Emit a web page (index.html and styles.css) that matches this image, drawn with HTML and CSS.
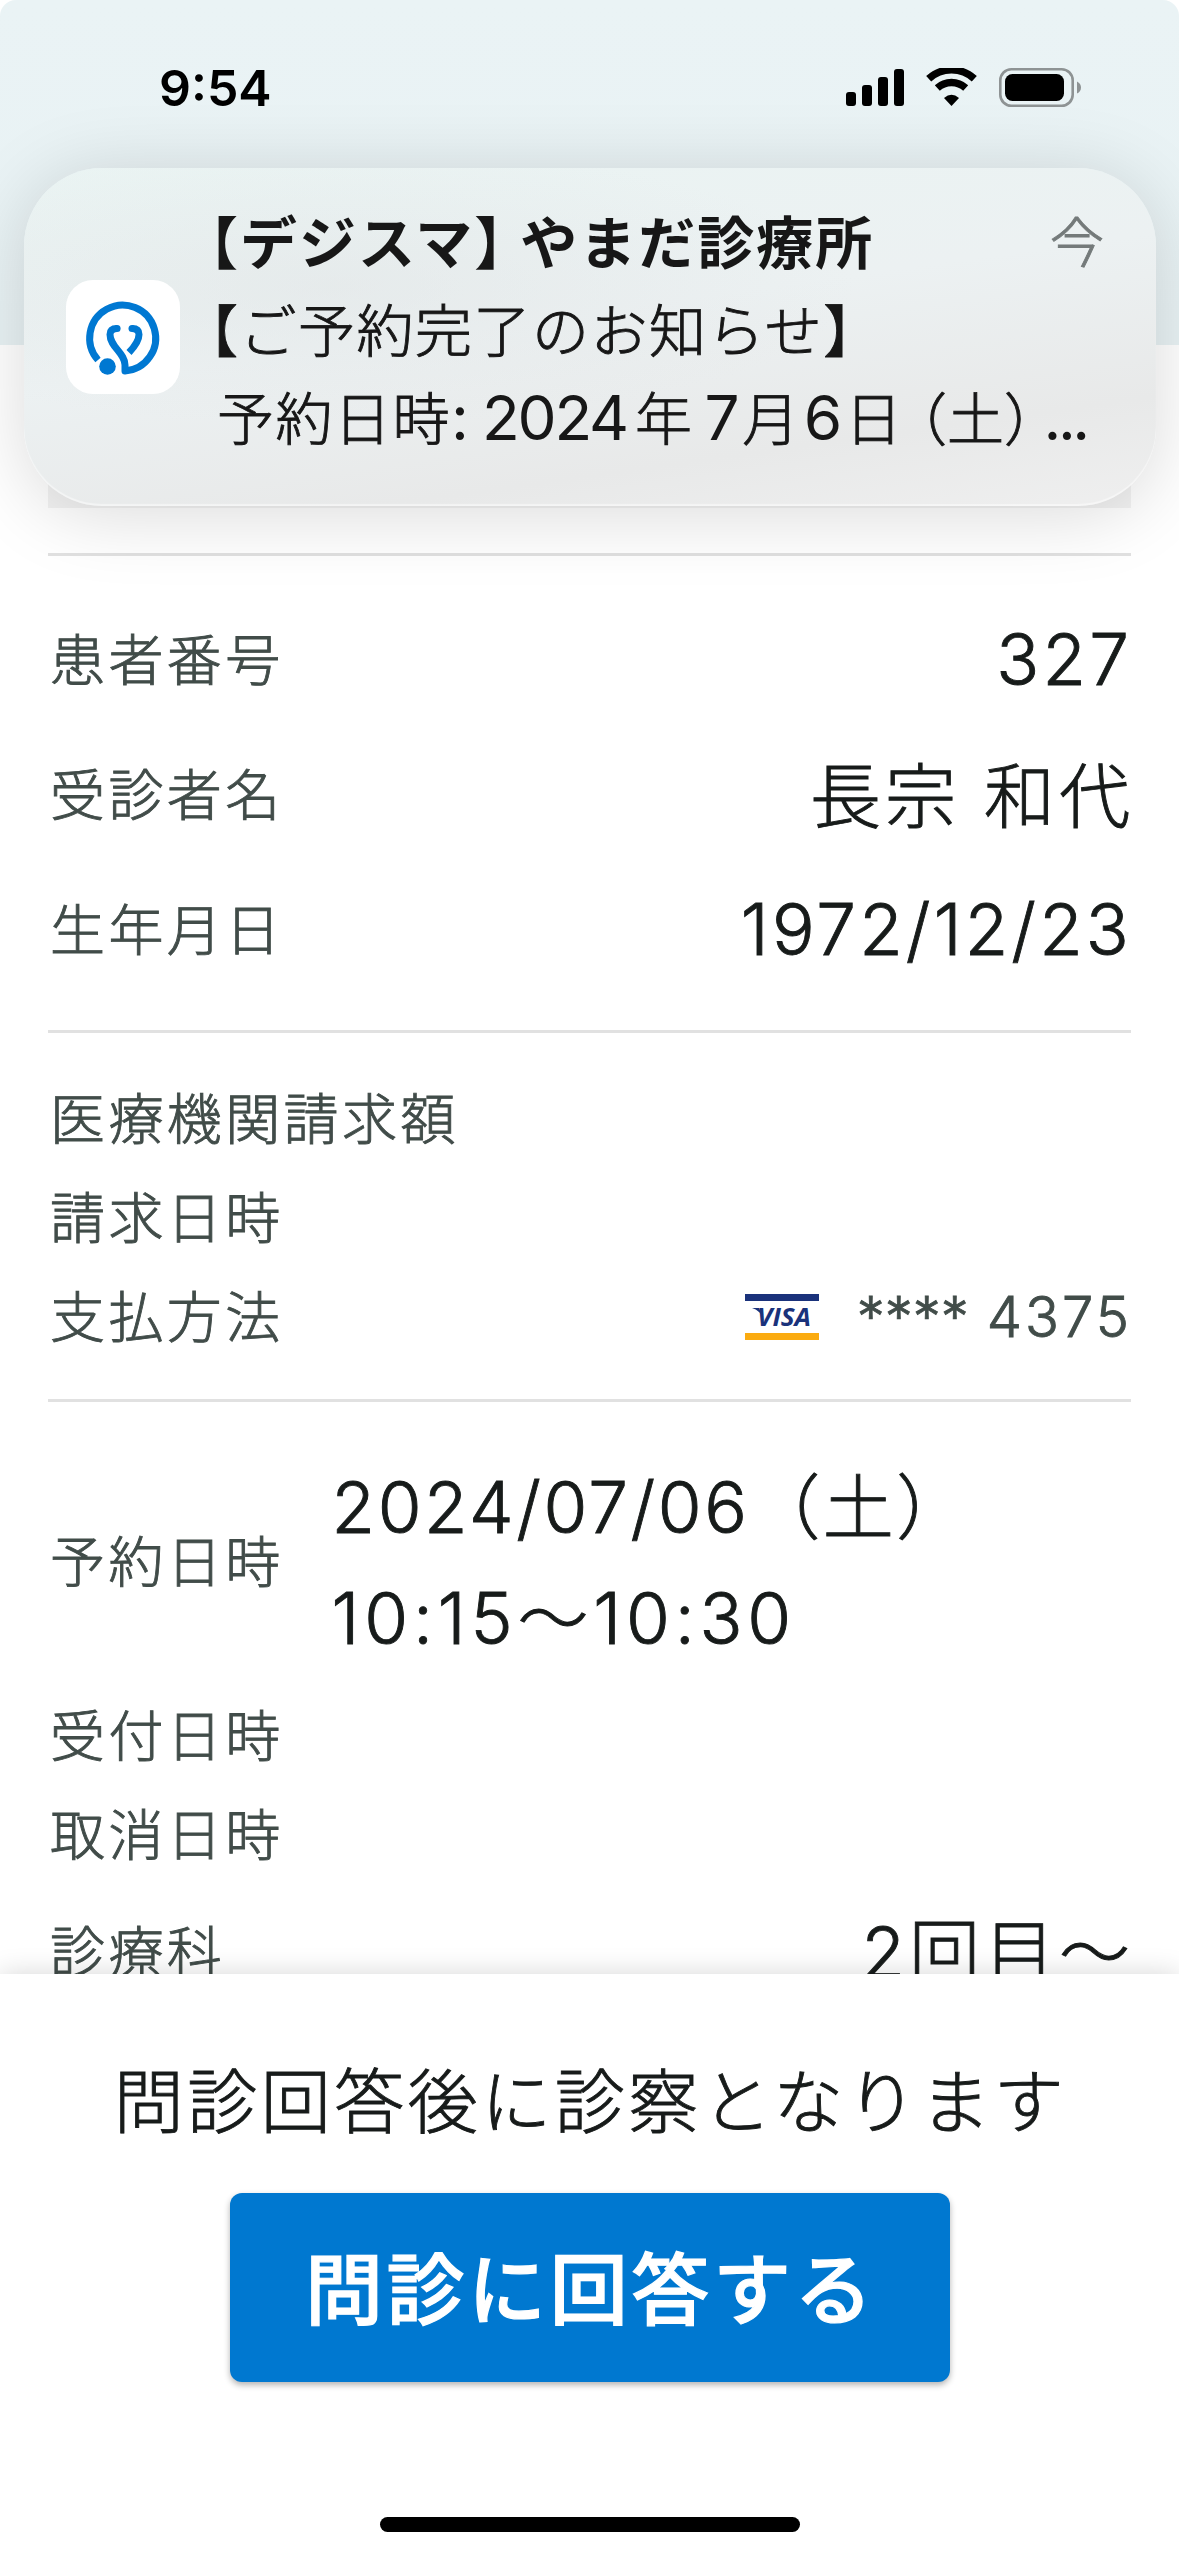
FILE: index.html
```html
<!DOCTYPE html>
<html lang="ja">

<head>
  <meta charset="UTF-8">
  <title>予約詳細</title>
  <link rel="stylesheet" href="styles.css">
</head>

<body>

  <div class="screen">
    <!-- Status Bar -->
    <header class="status-bar">
      <span class="time">9:54</span>
      <svg class="status-icons" width="236" height="40" viewBox="0 0 236 40">
        <rect x="0" y="24" width="10" height="14" rx="3" />
        <rect x="16" y="17" width="10" height="21" rx="3" />
        <rect x="32" y="9" width="10" height="29" rx="3" />
        <rect x="48" y="1" width="10" height="37" rx="3" />
        <g fill="none" stroke="#000">
          <path d="M82.7 10.8 A33.5 33.5 0 0 1 128.3 10.8" stroke-width="7.4" />
          <path d="M91.3 20.1 A21 21 0 0 1 119.7 20.1" stroke-width="7.4" />
        </g>
        <path d="M98 30 Q105.500 23.500 113 30 L105.500 38 Z" />
        <rect x="154.300" y="1.300" width="72.400" height="36.400" rx="11" fill="none" stroke="#8e9394" stroke-width="2.600" />
        <rect x="159" y="6" width="59" height="27" rx="7.500" />
        <path d="M231 13.500 Q235 15.500 235 19.500 Q235 23.500 231 25.500 Z" fill="#8e9394" />
      </svg>
    </header>

    <main class="content">
      <div class="notice"></div>

      <section class="section patient">
        <div class="row large">
          <span class="label">患者番号</span>
          <span class="value number">327</span>
        </div>
        <div class="row large">
          <span class="label">受診者名</span>
          <span class="value kanji">長宗 和代</span>
        </div>
        <div class="row large">
          <span class="label">生年月日</span>
          <span class="value number">1972/12/23</span>
        </div>
      </section>

      <section class="section">
        <div class="row"><span class="label">医療機関請求額</span></div>
        <div class="row"><span class="label">請求日時</span></div>
        <div class="row">
          <span class="label">支払方法</span>
          <span class="card">
            <svg width="74" height="46" viewBox="0 0 74 46">
              <rect width="74" height="7" fill="#1a327b" />
              <rect y="39" width="74" height="7" fill="#fbab10" />
              <path d="M7 14 H14 L17 21 L14 18 Q11 15 7 14 Z" fill="#1a327b" />
              <text class="visa" x="12" y="32" textLength="54" lengthAdjust="spacingAndGlyphs">VISA</text>
            </svg>
            <span class="stars">****</span>
            <span class="digits">4375</span>
          </span>
        </div>
      </section>

      <section class="section">
        <div class="row reserve">
          <span class="label">予約日時</span>
          <div class="value slot">
            <div>2024/07/06（土）</div>
            <div class="slot-time">10:15～10:30</div>
          </div>
        </div>
        <div class="row"><span class="label">受付日時</span></div>
        <div class="row"><span class="label">取消日時</span></div>
        <div class="row large">
          <span class="label">診療科</span>
          <span class="value kanji">2回目～</span>
        </div>
      </section>
    </main>

    <!-- Bottom Sheet -->
    <footer class="sheet">
      <p>問診回答後に診察となります</p>
      <button>問診に回答する</button>
      <div class="home-bar"></div>
    </footer>

    <!-- Push Notification -->
    <div class="push">
      <div class="app-icon">
        <svg width="114" height="114" viewBox="-1.500 -1 114 114" fill="none" stroke="#0078d2" stroke-width="7" stroke-linecap="round" stroke-linejoin="round">
          <path d="M30.500 79 A33 33 0 1 1 57.500 90 V84 C57.500 72 42.500 66 42.500 53.500 Q42.500 47.500 49.500 47.500" stroke-linecap="butt" />
          <path d="M49.500 47.500 H49.600" />
          <path d="M64.500 47.500 Q71.500 47.500 71.500 53.500 Q71.500 61 61.500 71.500" stroke-linecap="butt" />
          <path d="M64.500 47.500 H64.600" />
          <circle cx="40" cy="85.500" r="9.500" fill="#fff" stroke="none" />
          <circle cx="40" cy="85.500" r="8.300" fill="#0078d2" stroke="none" />
        </svg>
      </div>
      <div class="push-text">
        <div class="push-title"><span>【デジスマ<span class="tight">】</span>やまだ診療所</span><span class="ago">今</span></div>
        <div class="push-line">【ご予約完了のお知らせ】</div>
        <div class="push-line indent">予約日時<b>: 2024</b><span class="year">年</span><b>7</b><span class="unit">月</span><b>6</b><span class="unit">日</span><span class="paren">（土）</span><b class="dots">...</b></div>
      </div>
    </div>
  </div>

</body>

</html>
```
FILE: styles.css
```css
body {
  margin: 0;
  background-color: #fff;
  font-family: Inter, "Noto Sans CJK JP", sans-serif;
  color: #171b1a;
}

.screen {
  position: relative;
  display: flex;
  flex-direction: column;
  width: 1179px;
  height: 2556px;
  overflow: hidden;
}

/* Status bar */
.status-bar {
  box-sizing: border-box;
  display: flex;
  justify-content: space-between;
  align-items: flex-start;
  flex: none;
  height: 345px;
  padding: 68px 97px 0 159px;
  border-radius: 16px 16px 0 0;
  background: linear-gradient(#eaf3f5, #e8f2f4);
}

.time {
  font-size: 50px;
  line-height: 40px;
  font-weight: 600;
  color: #000;
}

/* Page content */
.content {
  flex: 1;
  min-height: 0;
  overflow: hidden;
  padding: 0 48px;
}

.notice {
  height: 163px;
  margin-bottom: 45px;
  background-color: #f3f3f3;
}

.section {
  border-top: 3px solid #e1e1e1;
  padding: 37px 2px 32px;
}

.patient {
  padding-bottom: 31.5px;
}

.row {
  display: flex;
  align-items: center;
  justify-content: space-between;
  height: 99px;
  white-space: nowrap;
}

.row.large {
  height: 135px;
}

/* thin outline brings the light weight up a little */
.label,
.value,
.card,
.sheet p,
.push-line,
.ago {
  font-weight: 300;
  -webkit-text-stroke: 0.9px currentColor;
}

.label {
  padding-bottom: 1px;
  font-size: 55px;
  line-height: 80px;
  letter-spacing: 3.4px;
  color: #414c49;
}

.value {
  font-size: 71px;
  line-height: 100px;
  letter-spacing: 2.5px;
}

.number {
  margin-right: -3px;
  padding-bottom: 3px;
  letter-spacing: 3.1px;
}

.kanji {
  margin-right: -5px;
  letter-spacing: 4px;
}

.card {
  display: flex;
  align-items: center;
  margin-right: -3px;
  color: #414c49;
  font-size: 56px;
  line-height: 80px;
}

.card .visa {
  font: italic bold 25px "Open Sans", sans-serif;
  fill: #1a327b;
  -webkit-text-stroke: 0;
}

.stars {
  margin-left: 38px;
}

.digits {
  margin-left: 18px;
  letter-spacing: 3px;
}

.row.reserve {
  height: 248px;
  justify-content: flex-start;
}

.slot {
  margin-left: 48px;
  line-height: 111px;
}

.slot-time {
  letter-spacing: 4.8px;
}

/* Bottom sheet */
.sheet {
  position: relative;
  box-sizing: border-box;
  display: flex;
  flex-direction: column;
  align-items: center;
  height: 582px;
  padding: 79px 0 24px;
  background-color: #fff;
  box-shadow: 0 0 26px rgba(0, 0, 0, 0.16);
}

.sheet p {
  margin: 0 0 40px 2px;
  font-size: 70px;
  line-height: 100px;
  letter-spacing: 3.5px;
}

.sheet button {
  width: 720px;
  height: 189px;
  padding: 0 0 6px 2px;
  border: none;
  border-radius: 12px;
  background-color: #0078d0;
  color: #fff;
  font-family: inherit;
  font-size: 78px;
  font-weight: 500;
  letter-spacing: 3.6px;
  -webkit-text-stroke: 1.2px #fff;
  box-shadow: 0 3px 6px rgba(0, 0, 0, 0.3);
}

.home-bar {
  width: 420px;
  height: 15px;
  margin-top: auto;
  border-radius: 8px;
  background-color: #000;
}

/* Push notification */
.push {
  position: absolute;
  top: 168px;
  left: 24px;
  box-sizing: border-box;
  display: flex;
  align-items: center;
  width: 1132px;
  height: 338px;
  padding: 0 42px;
  border-radius: 78px;
  background: radial-gradient(ellipse at 27% 35%, rgba(223, 226, 227, 0.45), rgba(223, 226, 227, 0) 45%), linear-gradient(172deg, #eaf4f3, #ecf1f2 45%, #e8e9e9 78%, #efefef);
  box-shadow: 0 8px 76px rgba(0, 0, 0, 0.15), inset 0 -2px 1px rgba(255, 255, 255, 0.5);
}

.app-icon {
  flex: none;
  width: 114px;
  height: 114px;
  border-radius: 27px;
  background-color: #fff;
}

.push-text {
  flex: 1;
  margin-left: 1px;
  padding-bottom: 9px;
  color: #171717;
  font-size: 57px;
  line-height: 88.5px;
  letter-spacing: 1.5px;
  white-space: nowrap;
}

.push-title {
  display: flex;
  justify-content: space-between;
  font-weight: 700;
  letter-spacing: 2px;
}

.push-title .tight {
  letter-spacing: -11px;
}

.push-title .ago {
  margin-right: 8px;
  font-size: 54px;
  color: #747a7a;
}

.push-line {
  height: 88.5px;
}

.push-line b {
  font-size: 62px;
  line-height: 80px;
  font-weight: 400;
  letter-spacing: -2.2px;
  -webkit-text-stroke: 0;
}

.indent {
  padding-left: 36px;
  line-height: 85px;
}

.year {
  margin: 0 11px 0 8px;
}

.unit {
  margin: 0 3px 0 5px;
}

/* half-width brackets */
.paren {
  margin-left: 12px;
  letter-spacing: 0;
  font-feature-settings: "halt";
}

.push-line .dots {
  margin-left: 11px;
  letter-spacing: -3.5px;
}
```
